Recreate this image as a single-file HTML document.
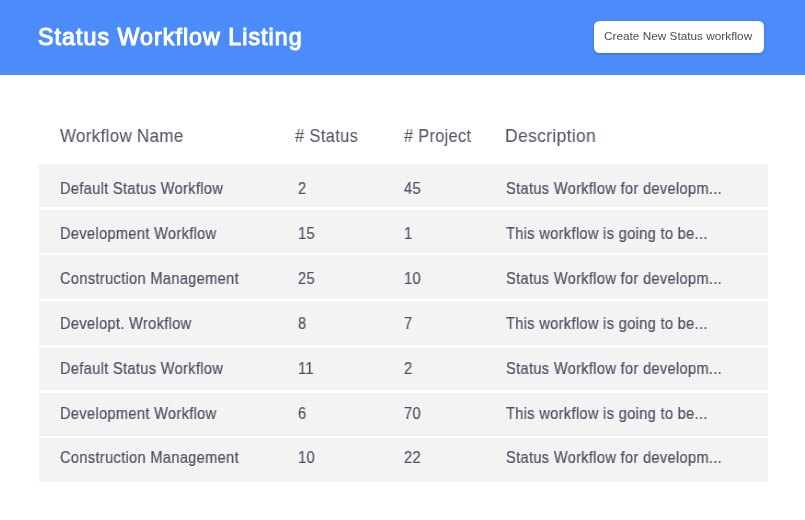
<!DOCTYPE html>
<html><head><meta charset="utf-8">
<style>
html,body{margin:0;padding:0;}
body{width:805px;height:520px;position:relative;overflow:hidden;background:#fff;font-family:"Liberation Sans",sans-serif;}
.hdr{position:absolute;left:0;top:0;width:805px;height:75px;background:#4c8bfa;}
.title{will-change:transform;position:absolute;left:37.5px;top:26.0px;font-size:23.2px;line-height:1;font-weight:normal;color:#fff;-webkit-text-stroke:1.1px #fff;letter-spacing:1.05px;white-space:nowrap;transform-origin:0 0;transform:scaleX(1.0);}
.btn{position:absolute;left:593.5px;top:20.5px;width:170.5px;height:32.0px;border-radius:5.5px;background:#fff;box-shadow:0 1px 3px rgba(10,30,110,0.3);}
.btntxt{will-change:transform;position:absolute;left:604.3px;top:30.5px;font-size:11.8px;line-height:1;color:#4a4a57;white-space:nowrap;transform-origin:0 0;transform:scaleX(1.0);}
.t{will-change:transform;position:absolute;white-space:nowrap;line-height:1;transform-origin:0 0;}
.h{letter-spacing:0.35px;color:#575669;-webkit-text-stroke:0.1px #575669;}
.r{letter-spacing:0.35px;color:#515062;-webkit-text-stroke:0.2px #515062;}
.row{position:absolute;left:39px;width:729px;background:#f3f3f4;}
</style></head><body>
<div class="hdr"></div>
<div class="title">Status Workflow Listing</div>
<div class="btn"></div>
<div class="btntxt">Create New Status workflow</div>
<div class="t h" style="left:59.80px;top:128.00px;font-size:17.8px;transform:scaleX(0.953);">Workflow Name</div><div class="t h" style="left:294.80px;top:128.00px;font-size:17.8px;transform:scaleX(0.93);"># Status</div><div class="t h" style="left:404.00px;top:128.00px;font-size:17.8px;transform:scaleX(0.919);"># Project</div><div class="t h" style="left:505.00px;top:128.00px;font-size:17.8px;transform:scaleX(0.982);">Description</div>
<div class="row" style="top:164.00px;height:43.30px"></div><div class="t r" style="left:59.50px;top:181.00px;font-size:15.9px;transform:scaleX(0.92);">Default Status Workflow</div><div class="t r" style="left:297.80px;top:181.00px;font-size:15.9px;transform:scaleX(0.92);">2</div><div class="t r" style="left:403.80px;top:181.00px;font-size:15.9px;transform:scaleX(0.92);">45</div><div class="t r" style="left:505.50px;top:181.00px;font-size:15.9px;transform:scaleX(0.92);">Status Workflow for developm...</div><div class="row" style="top:209.90px;height:42.70px"></div><div class="t r" style="left:59.50px;top:225.90px;font-size:15.9px;transform:scaleX(0.92);">Development Workflow</div><div class="t r" style="left:297.80px;top:225.90px;font-size:15.9px;transform:scaleX(0.92);">15</div><div class="t r" style="left:403.80px;top:225.90px;font-size:15.9px;transform:scaleX(0.92);">1</div><div class="t r" style="left:505.50px;top:225.90px;font-size:15.9px;transform:scaleX(0.92);">This workflow is going to be...</div><div class="row" style="top:255.20px;height:43.60px"></div><div class="t r" style="left:59.50px;top:270.80px;font-size:15.9px;transform:scaleX(0.92);">Construction Management</div><div class="t r" style="left:297.80px;top:270.80px;font-size:15.9px;transform:scaleX(0.92);">25</div><div class="t r" style="left:403.80px;top:270.80px;font-size:15.9px;transform:scaleX(0.92);">10</div><div class="t r" style="left:505.50px;top:270.80px;font-size:15.9px;transform:scaleX(0.92);">Status Workflow for developm...</div><div class="row" style="top:301.40px;height:43.50px"></div><div class="t r" style="left:59.50px;top:315.70px;font-size:15.9px;transform:scaleX(0.92);">Developt. Wrokflow</div><div class="t r" style="left:297.80px;top:315.70px;font-size:15.9px;transform:scaleX(0.92);">8</div><div class="t r" style="left:403.80px;top:315.70px;font-size:15.9px;transform:scaleX(0.92);">7</div><div class="t r" style="left:505.50px;top:315.70px;font-size:15.9px;transform:scaleX(0.92);">This workflow is going to be...</div><div class="row" style="top:347.50px;height:42.60px"></div><div class="t r" style="left:59.50px;top:360.60px;font-size:15.9px;transform:scaleX(0.92);">Default Status Workflow</div><div class="t r" style="left:297.80px;top:360.60px;font-size:15.9px;transform:scaleX(0.92);">11</div><div class="t r" style="left:403.80px;top:360.60px;font-size:15.9px;transform:scaleX(0.92);">2</div><div class="t r" style="left:505.50px;top:360.60px;font-size:15.9px;transform:scaleX(0.92);">Status Workflow for developm...</div><div class="row" style="top:392.70px;height:43.00px"></div><div class="t r" style="left:59.50px;top:405.50px;font-size:15.9px;transform:scaleX(0.92);">Development Workflow</div><div class="t r" style="left:297.80px;top:405.50px;font-size:15.9px;transform:scaleX(0.92);">6</div><div class="t r" style="left:403.80px;top:405.50px;font-size:15.9px;transform:scaleX(0.92);">70</div><div class="t r" style="left:505.50px;top:405.50px;font-size:15.9px;transform:scaleX(0.92);">This workflow is going to be...</div><div class="row" style="top:438.30px;height:43.30px"></div><div class="t r" style="left:59.50px;top:450.40px;font-size:15.9px;transform:scaleX(0.92);">Construction Management</div><div class="t r" style="left:297.80px;top:450.40px;font-size:15.9px;transform:scaleX(0.92);">10</div><div class="t r" style="left:403.80px;top:450.40px;font-size:15.9px;transform:scaleX(0.92);">22</div><div class="t r" style="left:505.50px;top:450.40px;font-size:15.9px;transform:scaleX(0.92);">Status Workflow for developm...</div>
</body></html>
